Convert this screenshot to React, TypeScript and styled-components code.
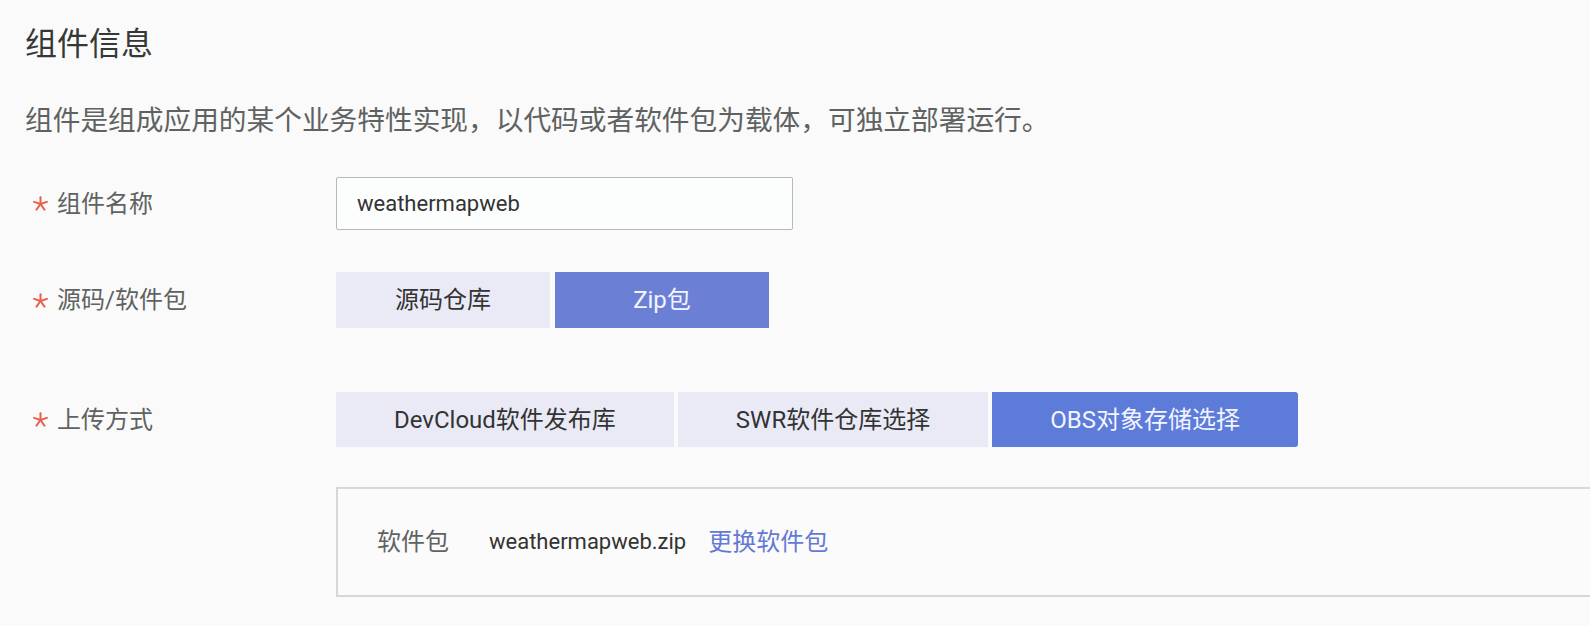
import React from "react";
import styled, { createGlobalStyle } from "styled-components";

const GlobalStyle = createGlobalStyle`
  html, body {
    margin: 0;
    padding: 0;
    background: #f9faf9;
  }
  body {
    font-family: Roboto, "Noto Sans CJK SC", sans-serif;
    overflow: hidden;
  }
`;

const Page = styled.main`
  padding: 24px 0 0 25px;
  width: 100%;
  box-sizing: border-box;
`;

const Title = styled.h2`
  margin: 0;
  font-size: 32px;
  line-height: 40px;
  font-weight: 400;
  color: #363838;
`;

const Description = styled.p`
  margin: 37px 0 0;
  font-size: 27.7px;
  line-height: 40px;
  color: #5f6262;
`;

const Form = styled.form`
  margin-top: 36px;
  display: flex;
  flex-direction: column;
`;

const FieldRow = styled.div<{ $offset: number }>`
  display: flex;
  align-items: center;
  margin-top: ${(p) => p.$offset}px;
`;

const FieldLabel = styled.label`
  flex: 0 0 311px;
  box-sizing: border-box;
  padding-left: 8px;
  display: flex;
  align-items: center;
  gap: 9px;
  font-size: 24px;
  line-height: 32px;
  color: #5f6262;
`;

const TextInput = styled.input`
  width: 457px;
  height: 53px;
  box-sizing: border-box;
  border: 1px solid #b6b9b9;
  border-radius: 2px;
  padding: 0 20px;
  font-family: Roboto, "Noto Sans CJK SC", sans-serif;
  font-size: 22px;
  color: #333;
  background: #fcfdfd;
  outline: none;
`;

const SegmentGroup = styled.div<{ $gap: number }>`
  display: flex;
  gap: ${(p) => p.$gap}px;
`;

const Segment = styled.button<{ $active?: boolean; $activeColor?: string; $height: number; $last?: boolean }>`
  height: ${(p) => p.$height}px;
  min-width: 214px;
  padding: 0 58px;
  border: none;
  border-radius: ${(p) => (p.$last ? "0 3px 3px 0" : "0")};
  background: ${(p) => (p.$active ? p.$activeColor : "#e9eaf6")};
  color: ${(p) => (p.$active ? "#f2f4ff" : "#333")};
  font-family: Roboto, "Noto Sans CJK SC", sans-serif;
  font-size: 24px;
  line-height: 32px;
  cursor: pointer;
  white-space: nowrap;
`;

const UploadPanel = styled.div`
  flex: 1;
  height: 110px;
  box-sizing: border-box;
  border: 2px solid #d5d8d7;
  border-right: none;
  display: flex;
  align-items: center;
  padding-left: 39px;
  background: #fafbfa;
`;

const PanelLabel = styled.span`
  flex: 0 0 112px;
  font-size: 24px;
  line-height: 32px;
  color: #5f6262;
`;

const FileName = styled.span`
  font-size: 22px;
  line-height: 32px;
  color: #333;
`;

const ChangeLink = styled.a`
  margin-left: 22px;
  font-size: 24px;
  line-height: 32px;
  color: #6479d4;
  text-decoration: none;
  cursor: pointer;
`;

const RequiredMark = () => (
  <svg width="15" height="15" viewBox="0 0 15 15" aria-hidden="true">
    <g stroke="#e8604c" strokeWidth="2" strokeLinecap="round">
      <line x1="7.5" y1="8" x2="7.5" y2="1.2" />
      <line x1="7.5" y1="8" x2="13.9" y2="5.9" />
      <line x1="7.5" y1="8" x2="11.5" y2="13.6" />
      <line x1="7.5" y1="8" x2="3.5" y2="13.6" />
      <line x1="7.5" y1="8" x2="1.1" y2="5.9" />
    </g>
  </svg>
);

const sourceOptions = ["源码仓库", "Zip包"];
const uploadOptions = ["DevCloud软件发布库", "SWR软件仓库选择", "OBS对象存储选择"];

export default function App() {
  return (
    <>
      <GlobalStyle />
      <Page>
        <Title>组件信息</Title>
        <Description>
          组件是组成应用的某个业务特性实现，以代码或者软件包为载体，可独立部署运行。
        </Description>
        <Form onSubmit={(e) => e.preventDefault()}>
          <FieldRow $offset={0}>
            <FieldLabel>
              <RequiredMark />
              组件名称
            </FieldLabel>
            <TextInput defaultValue="weathermapweb" />
          </FieldRow>
          <FieldRow $offset={42}>
            <FieldLabel>
              <RequiredMark />
              源码/软件包
            </FieldLabel>
            <SegmentGroup $gap={5}>
              {sourceOptions.map((o, i) => (
                <Segment key={o} type="button" $height={56} $active={i === 1} $activeColor="#6b80d4">
                  {o}
                </Segment>
              ))}
            </SegmentGroup>
          </FieldRow>
          <FieldRow $offset={64}>
            <FieldLabel>
              <RequiredMark />
              上传方式
            </FieldLabel>
            <SegmentGroup $gap={4}>
              {uploadOptions.map((o, i) => (
                <Segment
                  key={o}
                  type="button"
                  $height={55}
                  $active={i === 2}
                  $last={i === uploadOptions.length - 1}
                  $activeColor="#5d7bd9"
                >
                  {o}
                </Segment>
              ))}
            </SegmentGroup>
          </FieldRow>
          <FieldRow $offset={40}>
            <FieldLabel aria-hidden="true" />
            <UploadPanel>
              <PanelLabel>软件包</PanelLabel>
              <FileName>weathermapweb.zip</FileName>
              <ChangeLink>更换软件包</ChangeLink>
            </UploadPanel>
          </FieldRow>
        </Form>
      </Page>
    </>
  );
}
